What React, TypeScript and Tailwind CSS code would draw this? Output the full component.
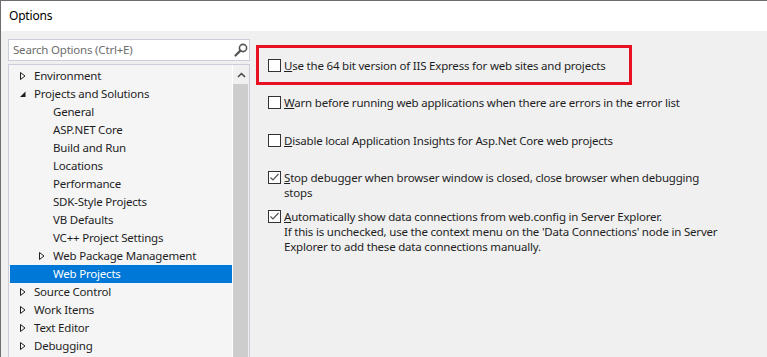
import type { ReactNode } from 'react';

type TreeItem = {
  label: string;
  level: 0 | 1;
  arrow?: 'collapsed' | 'expanded';
  selected?: boolean;
};

const treeItems: TreeItem[] = [
  { label: 'Environment', level: 0, arrow: 'collapsed' },
  { label: 'Projects and Solutions', level: 0, arrow: 'expanded' },
  { label: 'General', level: 1 },
  { label: 'ASP.NET Core', level: 1 },
  { label: 'Build and Run', level: 1 },
  { label: 'Locations', level: 1 },
  { label: 'Performance', level: 1 },
  { label: 'SDK-Style Projects', level: 1 },
  { label: 'VB Defaults', level: 1 },
  { label: 'VC++ Project Settings', level: 1 },
  { label: 'Web Package Management', level: 1, arrow: 'collapsed' },
  { label: 'Web Projects', level: 1, selected: true },
  { label: 'Source Control', level: 0, arrow: 'collapsed' },
  { label: 'Work Items', level: 0, arrow: 'collapsed' },
  { label: 'Text Editor', level: 0, arrow: 'collapsed' },
  { label: 'Debugging', level: 0, arrow: 'collapsed' },
];

function Arrow({ kind }: { kind?: 'collapsed' | 'expanded' }) {
  if (!kind) return <span className="w-[8px]" />;
  if (kind === 'collapsed') {
    return (
      <svg width="8" height="10" viewBox="0 0 8 10" className="shrink-0">
        <path d="M1.5 1.5 L6 5 L1.5 8.5 Z" fill="none" stroke="#1e1e1e" strokeWidth="1" />
      </svg>
    );
  }
  return (
    <svg width="8" height="10" viewBox="0 0 8 10" className="shrink-0">
      <path d="M6.5 2.5 L6.5 8 L1 8 Z" fill="#1e1e1e" />
    </svg>
  );
}

function Checkbox({ checked }: { checked?: boolean }) {
  return (
    <div className="mt-[1px] h-[13px] w-[13px] shrink-0 border border-[#333333] bg-white">
      {checked && (
        <svg width="11" height="11" viewBox="0 0 11 11">
          <path d="M1.5 5.5 L4 8 L9.5 2" fill="none" stroke="#555555" strokeWidth="1.2" />
        </svg>
      )}
    </div>
  );
}

function Option({ checked, children }: { checked?: boolean; children: ReactNode }) {
  return (
    <div className="flex items-start gap-[3px]">
      <Checkbox checked={checked} />
      <div className="whitespace-nowrap text-[11.5px] leading-[15px] tracking-[-0.2px] text-[#1e1e1e]">{children}</div>
    </div>
  );
}

export default function App() {
  return (
    <div
      className="flex h-[357px] w-[767px] flex-col overflow-hidden border-l border-t border-[#6d6d6d] bg-[#f0f0f0]"
      style={{ fontFamily: '"Noto Sans", "Open Sans", sans-serif' }}
    >
      {/* title bar */}
      <div className="flex h-[30px] items-center bg-white pl-[8px] text-[12px] tracking-[-0.2px] text-black">Options</div>

      <div className="flex min-h-0 flex-1">
        {/* left: search + tree */}
        <div className="flex w-[249px] flex-col pl-[7px] pt-[8px]">
          <div className="flex h-[22px] items-center justify-between border border-[#cccedb] bg-white pl-[4px] pr-[1px]">
            <span className="text-[11.5px] tracking-[-0.2px] text-[#6d6d6d]">Search Options (Ctrl+E)</span>
            <svg width="14" height="14" viewBox="0 0 14 14">
              <circle cx="9" cy="5" r="3.6" fill="none" stroke="#555555" strokeWidth="1.6" />
              <path d="M6.4 7.6 L1.5 12.5" stroke="#555555" strokeWidth="2.2" strokeLinecap="round" />
            </svg>
          </div>

          <div className="mt-[3px] flex min-h-0 flex-1 border border-b-0 border-[#cccedb] bg-[#f5f5f5]">
            <div className="flex-1 pl-[1px] pt-[2px]">
              {treeItems.map((item) => (
                <div
                  key={item.label}
                  className={`flex h-[18px] items-center gap-[4px] whitespace-nowrap text-[11.5px] tracking-[-0.2px] ${
                    item.level === 0 ? 'pl-[9px]' : 'pl-[28px]'
                  } ${item.selected ? 'bg-[#0078d7] text-white' : 'text-[#1e1e1e]'}`}
                >
                  <Arrow kind={item.arrow} />
                  <span className="ml-[3px]">{item.label}</span>
                </div>
              ))}
            </div>
            {/* scrollbar */}
            <div className="flex w-[17px] flex-col border-l border-white bg-[#f0f0f0]">
              <div className="flex h-[19px] items-center justify-center">
                <svg width="9" height="6" viewBox="0 0 9 6">
                  <path d="M1 5 L4.5 1.5 L8 5" fill="none" stroke="#444444" strokeWidth="1.5" />
                </svg>
              </div>
              <div className="mr-[1px] flex-1 bg-[#cdcdcd]" />
            </div>
          </div>
        </div>

        {/* right: options */}
        <div className="flex flex-1 flex-col pl-[6px] pt-[14px]">
          <div className="h-[40px] w-[376px] border-[3px] border-[#e81123] pl-[9px] pt-[10px]">
            <Option>
              <span className="underline">U</span>se the 64 bit version of IIS Express for web sites and projects
            </Option>
          </div>
          <div className="mt-[10px] pl-[12px]">
            <Option>
              <span className="underline">W</span>arn before running web applications when there are errors in the error list
            </Option>
          </div>
          <div className="mt-[23px] pl-[12px]">
            <Option>
              <span className="underline">D</span>isable local Application Insights for Asp.Net Core web projects
            </Option>
          </div>
          <div className="mt-[22px] pl-[12px]">
            <Option checked>
              <span className="underline">S</span>top debugger when browser window is closed, close browser when debugging
              <br />
              stops
            </Option>
          </div>
          <div className="mt-[9px] pl-[12px]">
            <Option checked>
              <span className="underline">A</span>utomatically show data connections from web.config in Server Explorer.
              <br />
              If this is unchecked, use the context menu on the 'Data Connections' node in Server
              <br />
              Explorer to add these data connections manually.
            </Option>
          </div>
        </div>
      </div>
    </div>
  );
}
